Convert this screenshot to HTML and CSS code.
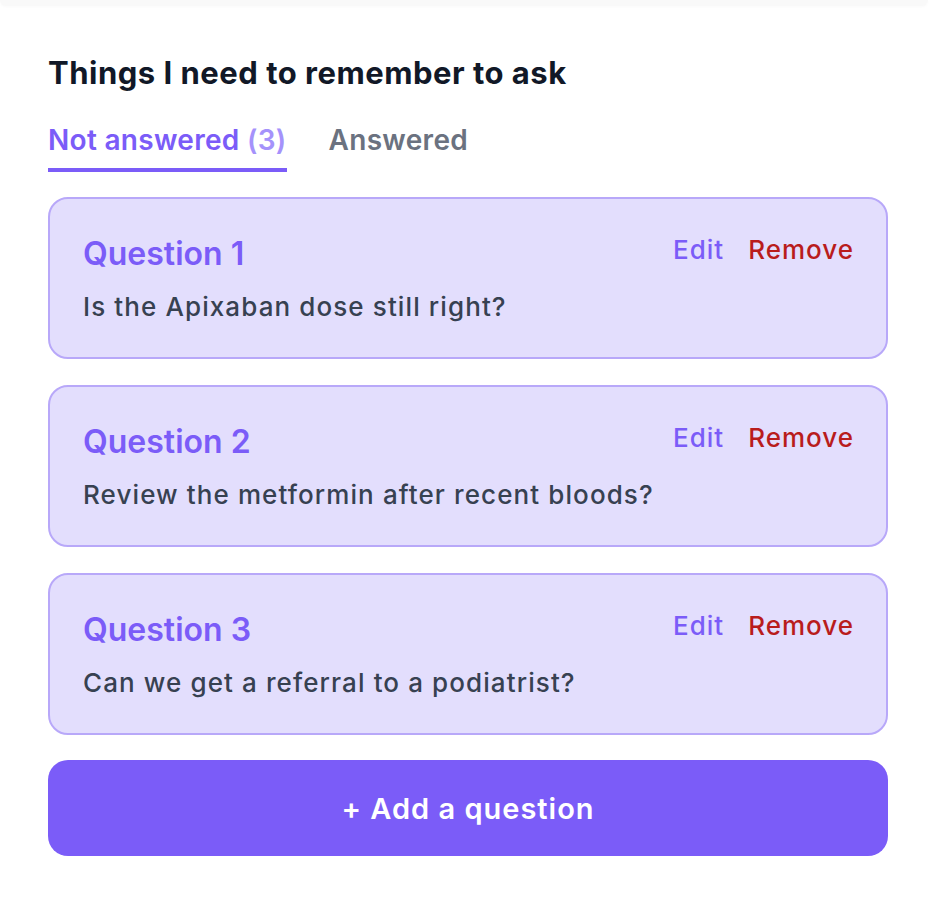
FILE: index.html
```html
<!DOCTYPE html>
<html lang="en">
<head>
<meta charset="utf-8">
<title>Things I need to remember to ask</title>
<link rel="stylesheet" href="styles.css">
</head>
<body>
<div class="top-edge"></div>
<main class="panel">
  <h2 class="title">Things I need to remember to ask</h2>
  <nav class="tabs">
    <span class="tab active">Not answered <span class="count">(3)</span></span>
    <span class="tab">Answered</span>
  </nav>
  <ul class="list">
    <li class="card">
      <div class="card-head">
        <h3 class="q-title">Question 1</h3>
        <div class="actions"><span class="edit">Edit</span><span class="remove">Remove</span></div>
      </div>
      <p class="q-text">Is the Apixaban dose still right?</p>
    </li>
    <li class="card">
      <div class="card-head">
        <h3 class="q-title">Question 2</h3>
        <div class="actions"><span class="edit">Edit</span><span class="remove">Remove</span></div>
      </div>
      <p class="q-text">Review the metformin after recent bloods?</p>
    </li>
    <li class="card">
      <div class="card-head">
        <h3 class="q-title">Question 3</h3>
        <div class="actions"><span class="edit">Edit</span><span class="remove">Remove</span></div>
      </div>
      <p class="q-text">Can we get a referral to a podiatrist?</p>
    </li>
  </ul>
  <button class="add">+ Add a question</button>
</main>
</body>
</html>
```
FILE: styles.css
```css
* { box-sizing: border-box; }
html, body { margin: 0; padding: 0; background: #ffffff; }
body {
  font-family: Inter, "Noto Sans", "Liberation Sans", sans-serif;
  -webkit-font-smoothing: antialiased;
}
.top-edge {
  height: 6px;
  margin: 0 8px 0 0;
  background: #f9f9f9;
  border-radius: 0 0 10px 10px;
  box-shadow: 0 1px 3px rgba(0,0,0,0.025);
}
.panel {
  padding: 47px 48px 0 48px;
}
.title {
  margin: 0;
  font-size: 31px;
  line-height: 40px;
  font-weight: 700;
  color: #111827;
  letter-spacing: 0.5px;
}
.tabs {
  display: flex;
  gap: 42px;
  margin-top: 29px;
}
.tab {
  font-size: 28px;
  line-height: 36px;
  font-weight: 600;
  letter-spacing: 0.3px;
  color: #6b7280;
  padding-bottom: 10px;
  border-bottom: 4px solid transparent;
}
.tab.active {
  color: #7b5cf8;
  border-bottom-color: #7b5cf8;
}
.count { color: #a592fb; }
.list {
  list-style: none;
  margin: 25px 0 0 0;
  padding: 0;
  display: flex;
  flex-direction: column;
  gap: 26px;
}
.card {
  background: #e3defd;
  border: 2px solid #b8a8f9;
  border-radius: 20px;
  padding: 35px 32px 0 33px;
  height: 162px;
}
.card-head {
  display: flex;
  justify-content: space-between;
  align-items: flex-start;
}
.q-title {
  margin: 0;
  font-size: 32px;
  line-height: 40px;
  font-weight: 600;
  color: #7b5cf8;
}
.actions {
  display: flex;
  gap: 24px;
  margin-top: -2px;
  font-size: 26px;
  line-height: 36px;
  font-weight: 500;
  letter-spacing: 1px;
}
.edit { color: #7b5cf8; }
.remove { color: #b91c1c; }
.q-text {
  margin: 16px 0 0 0;
  font-size: 26px;
  line-height: 34px;
  font-weight: 500;
  letter-spacing: 1.1px;
  color: #374151;
}
.add {
  display: block;
  width: 100%;
  margin-top: 25px;
  height: 96px;
  border: none;
  border-radius: 20px;
  background: #7b5cf8;
  color: #ffffff;
  font-family: inherit;
  font-size: 29px;
  font-weight: 600;
  letter-spacing: 1px;
}
```
